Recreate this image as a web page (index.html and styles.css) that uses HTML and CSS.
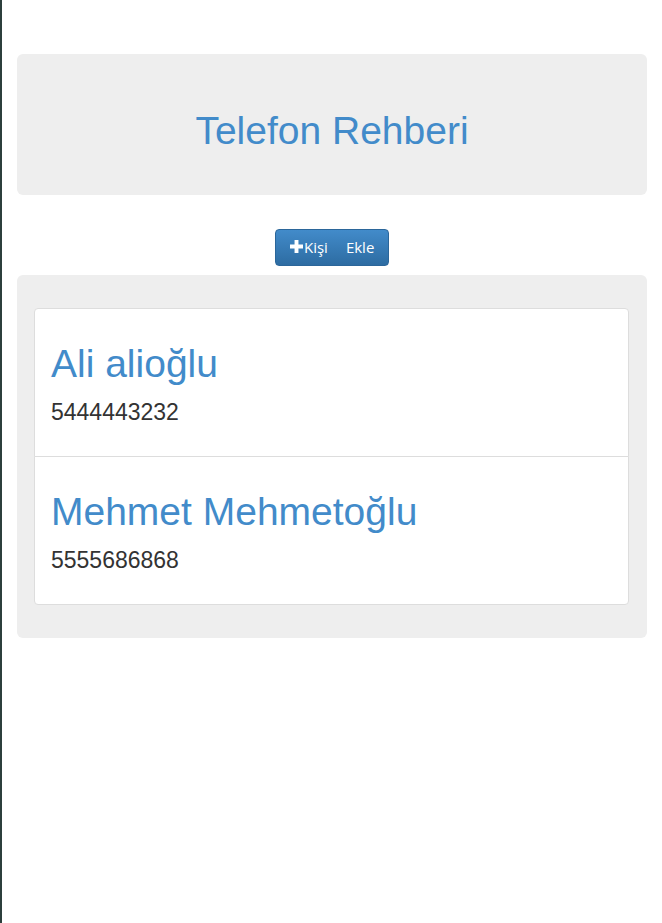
FILE: index.html
```html
<!DOCTYPE html>
<html lang="tr">
<head>
<meta charset="utf-8">
<title>Telefon Rehberi</title>
<link rel="stylesheet" href="styles.css">
</head>
<body>
<div class="container">
  <div class="jumbotron header">
    <h1 class="title">Telefon Rehberi</h1>
  </div>
  <div class="actions">
    <button class="btn-add" type="button"><svg class="plus" viewBox="0 0 12 12" width="13" height="13"><path d="M4.2 0h3.6v4.2H12v3.6H7.8V12H4.2V7.8H0V4.2h4.2z" fill="#fff"/></svg><span>Kişi</span><span class="gap"></span><span>Ekle</span></button>
  </div>
  <div class="jumbotron list-wrap">
    <ul class="list-group">
      <li class="list-item">
        <h1 class="name">Ali alioğlu</h1>
        <p class="phone">5444443232</p>
      </li>
      <li class="list-item">
        <h1 class="name">Mehmet Mehmetoğlu</h1>
        <p class="phone">5555686868</p>
      </li>
    </ul>
  </div>
</div>
</body>
</html>
```
FILE: styles.css
```css
html, body {
  margin: 0;
  padding: 0;
  background: #fff;
}
body {
  border-left: 2px solid #2c3f3c;
  min-height: 923px;
  box-sizing: border-box;
  font-family: "Liberation Sans", Arial, sans-serif;
  color: #333;
}
.container {
  padding: 54px 15px 0 15px;
}
.jumbotron {
  background: #eeeeee;
  border-radius: 6px;
}
.header {
  padding: 33px 17px 31px;
}
.title {
  margin: 22px 0 11px;
  font-size: 39px;
  line-height: 43.5px;
  font-weight: 400;
  color: #428bca;
  text-align: center;
}
.actions {
  display: flex;
  justify-content: center;
  padding: 34px 0 9px;
}
.btn-add {
  display: flex;
  align-items: center;
  height: 37px;
  width: 114px;
  padding: 0 0 0 14px;
  border: 1px solid #2b669a;
  border-radius: 4px;
  background: linear-gradient(to bottom, #428bca 0%, #2d6ca2 100%);
  color: #fff;
  font-family: "Open Sans", "Noto Sans", sans-serif;
  font-size: 15px;
  box-sizing: border-box;
  cursor: pointer;
}
.plus {
  display: block;
  margin-right: 1px;
  margin-top: -1px;
}
.gap {
  display: inline-block;
  width: 18px;
}
.list-wrap {
  padding: 33px 18px 33px 17px;
}
.list-group {
  list-style: none;
  margin: 0;
  padding: 0;
}
.list-item {
  background: #fff;
  border: 1px solid #dddddd;
  padding: 11px 16px;
  margin-bottom: -1px;
}
.list-item:first-child {
  border-radius: 4px 4px 0 0;
}
.list-item:last-child {
  border-radius: 0 0 4px 4px;
  margin-bottom: 0;
}
.name {
  margin: 22px 0 11px;
  font-size: 39px;
  line-height: 43.5px;
  font-weight: 400;
  color: #428bca;
}
.phone {
  margin: 0 0 15.5px;
  font-size: 23px;
  line-height: 33px;
  font-weight: 400;
  color: #333;
}
```
